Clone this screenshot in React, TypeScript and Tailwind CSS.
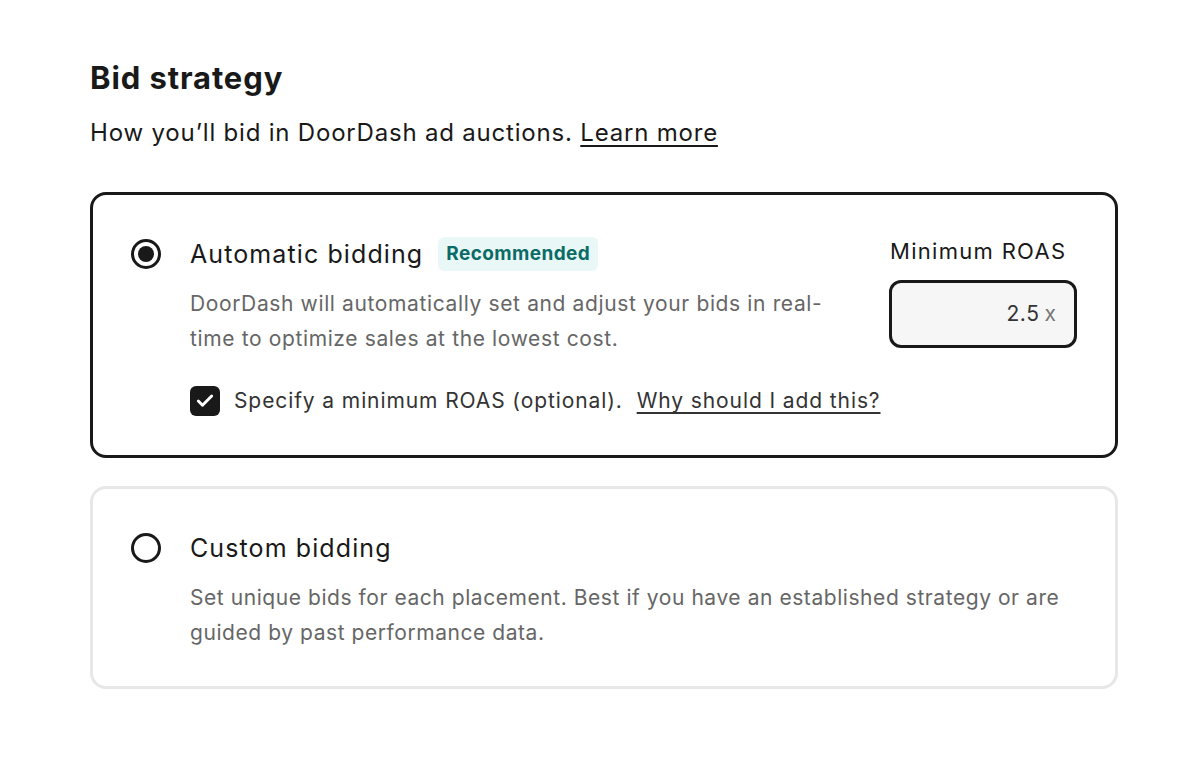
import { Check } from 'lucide-react'

const font = { fontFamily: 'Inter, "Open Sans", sans-serif' }

function Radio({ checked }: { checked: boolean }) {
  return (
    <div className="w-[30px] h-[30px] rounded-full border-[3px] border-[#191919] flex items-center justify-center shrink-0">
      {checked && <div className="w-[16px] h-[16px] rounded-full bg-[#191919]" />}
    </div>
  )
}

export default function App() {
  return (
    <div className="min-h-screen bg-white text-[#191919] px-[90px] pt-[58px]" style={font}>
      <h1 className="text-[31px] font-bold leading-[40px] tracking-[0.9px]">Bid strategy</h1>
      <p className="text-[24px] leading-[32px] mt-[19px] text-[#191919] tracking-[0.8px]">
        How you’ll bid in DoorDash ad auctions.{' '}
        <a className="underline underline-offset-4 decoration-[1.5px]">Learn more</a>
      </p>

      {/* Automatic bidding card */}
      <div className="mt-[43px] w-[1028px] h-[266px] border-[3px] border-[#191919] rounded-[16px] pl-[38px] pr-[38px] pt-[37px] flex">
        <div className="pt-[7px]">
          <Radio checked />
        </div>
        <div className="ml-[29px] flex-1">
          <div className="flex items-center h-[44px]">
            <span className="text-[25px] leading-[32px] tracking-[1.1px]">Automatic bidding</span>
            <span className="ml-[15px] px-[8px] h-[34px] flex items-center rounded-[6px] bg-[#e9f8f7] text-[#0b6b66] text-[19px] font-bold tracking-[0.4px]">
              Recommended
            </span>
          </div>
          <p className="mt-[10px] text-[21px] leading-[35px] text-[#666666] tracking-[0.63px]">
            DoorDash will automatically set and adjust your bids in real-
            <br />
            time to optimize sales at the lowest cost.
          </p>
          <div className="flex items-center mt-[29px] text-[21px] text-[#333333] tracking-[0.9px]">
            <div className="w-[30px] h-[30px] rounded-[6px] bg-[#191919] flex items-center justify-center">
              <Check size={20} strokeWidth={3.5} color="white" />
            </div>
            <span className="ml-[14px]">Specify a minimum ROAS (optional).</span>
            <a className="ml-[14px] underline underline-offset-4 decoration-[1.5px]">Why should I add this?</a>
          </div>
        </div>
        <div className="w-[188px] pt-[5px]">
          <div className="text-[22px] leading-[28px] pl-[1px] tracking-[1.3px]">Minimum ROAS</div>
          <div className="mt-[15px] h-[68px] border-[3px] border-[#191919] rounded-[12px] bg-[#f6f6f6] flex items-center justify-end pr-[18px] text-[21px]">
            <span className="text-[#333333] tracking-[0.6px]">2.5</span>
            <span className="ml-[5px] text-[#767676]">x</span>
          </div>
        </div>
      </div>

      {/* Custom bidding card */}
      <div className="mt-[28px] w-[1028px] h-[203px] border-[3px] border-[#e7e7e7] rounded-[16px] pl-[38px] pt-[37px] flex">
        <div className="pt-[7px]">
          <Radio checked={false} />
        </div>
        <div className="ml-[29px]">
          <div className="flex items-center h-[44px]">
            <span className="text-[25px] leading-[32px] tracking-[1.1px]">Custom bidding</span>
          </div>
          <p className="mt-[10px] text-[21px] leading-[35px] text-[#666666] tracking-[0.56px]">
            Set unique bids for each placement. Best if you have an established strategy or are
            <br />
            guided by past performance data.
          </p>
        </div>
      </div>
    </div>
  )
}
